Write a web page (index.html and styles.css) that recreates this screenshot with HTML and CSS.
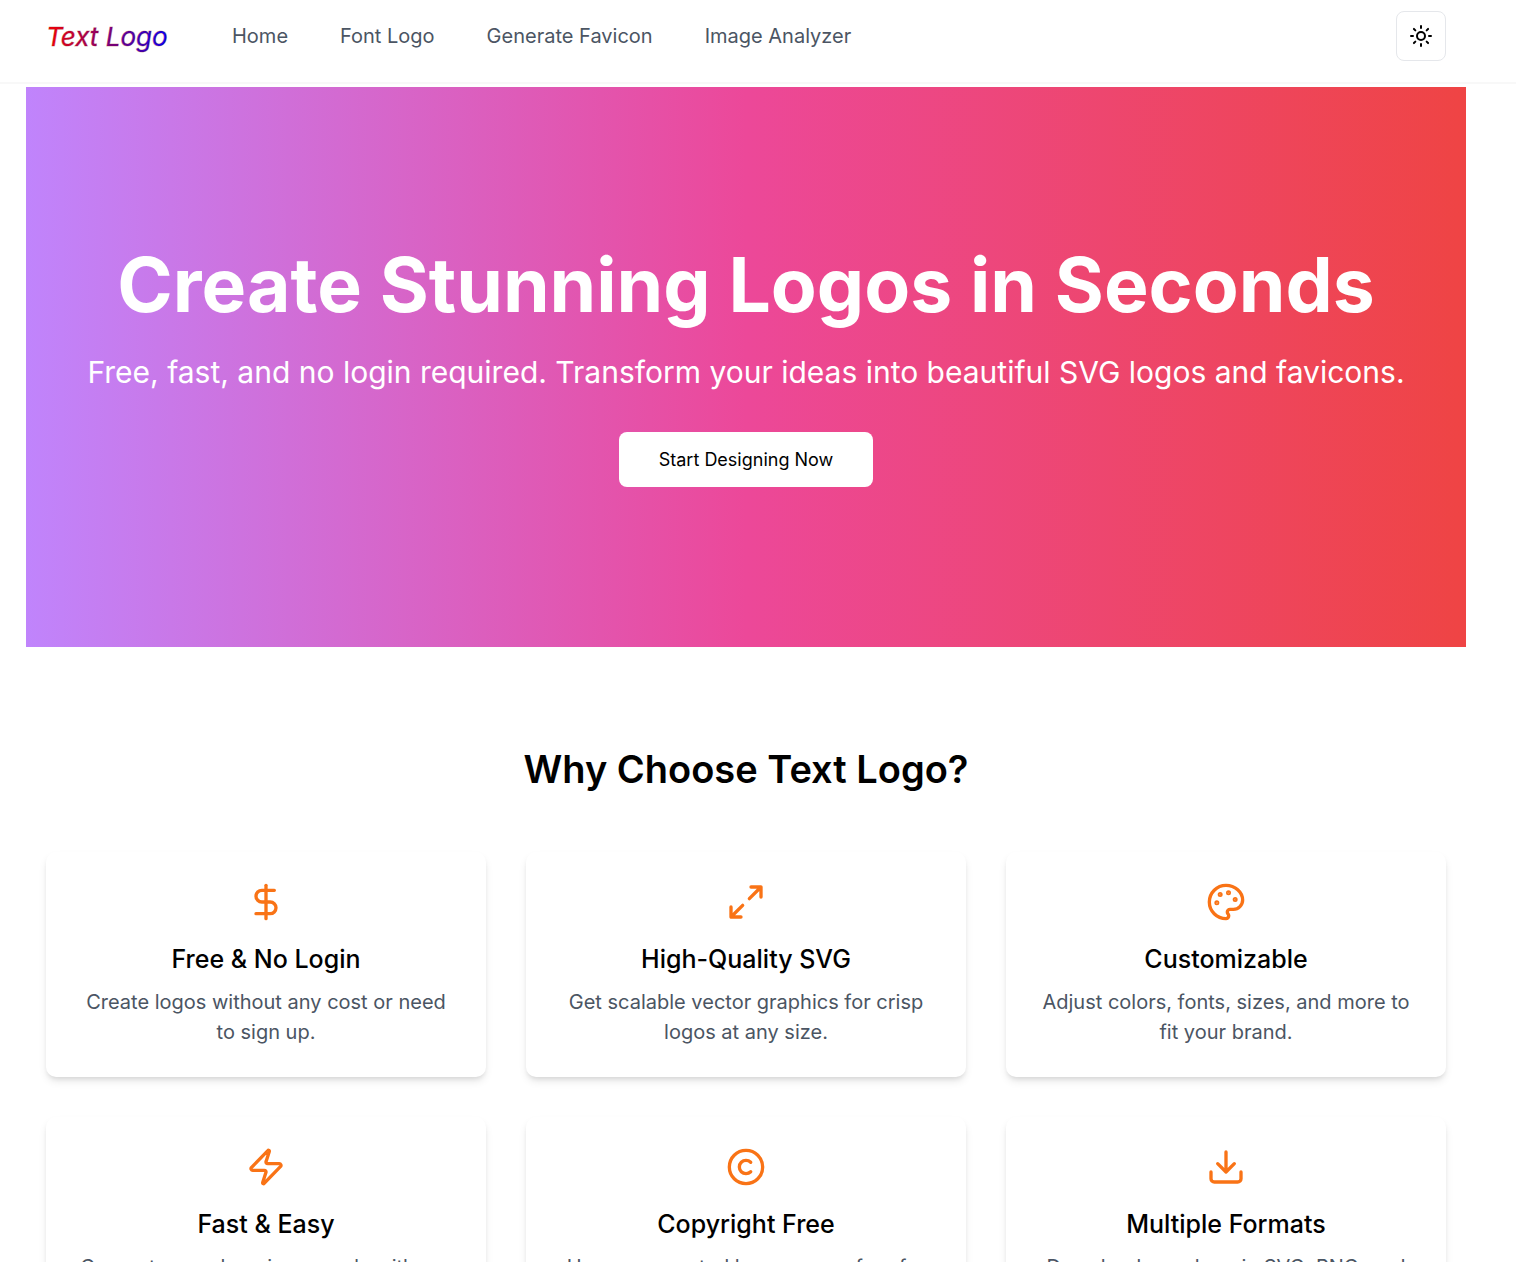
FILE: index.html
```html
<!DOCTYPE html>
<html lang="en">
<head>
  <meta charset="utf-8">
  <meta name="viewport" content="width=device-width, initial-scale=1">
  <title>Text Logo</title>
  <link rel="stylesheet" href="styles.css">
</head>
<body>
<header class="header">
  <a href="#" class="logo" aria-label="Text Logo">
    <svg width="124" height="40" viewBox="0 0 124 40">
      <defs>
        <linearGradient id="logo-fill" x1="0" x2="1" y1="0" y2="0">
          <stop offset="0" stop-color="#ff0000"/>
          <stop offset="1" stop-color="#0000ff"/>
        </linearGradient>
      </defs>
      <text x="0" y="30" class="logo-text">Text Logo</text>
    </svg>
  </a>
  <nav class="nav">
    <a href="#">Home</a>
    <a href="#">Font Logo</a>
    <a href="#">Generate Favicon</a>
    <a href="#">Image Analyzer</a>
  </nav>
  <button class="theme-toggle" aria-label="Toggle theme">
    <svg class="sun" viewBox="0 0 24 24">
      <circle cx="12" cy="12" r="4"/>
      <path d="M12 2v2M12 20v2M4.93 4.93l1.41 1.41M17.66 17.66l1.41 1.41M2 12h2M20 12h2M6.34 17.66l-1.41 1.41M19.07 4.93l-1.41 1.41"/>
    </svg>
  </button>
</header>

<main class="main">
  <section class="hero">
    <h1>Create Stunning Logos in Seconds</h1>
    <p>Free, fast, and no login required. Transform your ideas into beautiful SVG logos and favicons.</p>
    <button class="start">Start Designing Now</button>
  </section>

  <section class="features">
    <h2>Why Choose Text Logo?</h2>
    <div class="grid">
      <div class="card">
        <svg class="icon" viewBox="0 0 24 24">
          <path d="M12 2v20"/>
          <path d="M17 5H9.5a3.5 3.5 0 0 0 0 7h5a3.5 3.5 0 0 1 0 7H6"/>
        </svg>
        <h3>Free &amp; No Login</h3>
        <p>Create logos without any cost or need to sign up.</p>
      </div>
      <div class="card">
        <svg class="icon" viewBox="0 0 24 24">
          <path d="M15 3h6v6M9 21H3v-6M21 3l-7 7M3 21l7-7"/>
        </svg>
        <h3>High-Quality SVG</h3>
        <p>Get scalable vector graphics for crisp logos at any size.</p>
      </div>
      <div class="card">
        <svg class="icon" viewBox="0 0 24 24">
          <g class="dots">
            <circle cx="13.5" cy="6.5" r=".5"/>
            <circle cx="17.5" cy="10.5" r=".5"/>
            <circle cx="8.5" cy="7.5" r=".5"/>
            <circle cx="6.5" cy="12.5" r=".5"/>
          </g>
          <path d="M12 2C6.5 2 2 6.5 2 12s4.5 10 10 10c.926 0 1.648-.746 1.648-1.688 0-.437-.18-.835-.437-1.125-.29-.289-.438-.652-.438-1.125a1.64 1.64 0 0 1 1.668-1.668h1.996c3.051 0 5.555-2.503 5.555-5.554C21.965 6.012 17.461 2 12 2z"/>
        </svg>
        <h3>Customizable</h3>
        <p>Adjust colors, fonts, sizes, and more to fit your brand.</p>
      </div>
      <div class="card">
        <svg class="icon" viewBox="0 0 24 24">
          <path d="M4 14a1 1 0 0 1-.78-1.63l9.9-10.2a.5.5 0 0 1 .86.46l-1.92 6.02A1 1 0 0 0 13 10h7a1 1 0 0 1 .78 1.63l-9.9 10.2a.5.5 0 0 1-.86-.46l1.92-6.02A1 1 0 0 0 11 14z"/>
        </svg>
        <h3>Fast &amp; Easy</h3>
        <p>Generate your logo in seconds with our simple tools.</p>
      </div>
      <div class="card">
        <svg class="icon" viewBox="0 0 24 24">
          <circle cx="12" cy="12" r="10"/>
          <path d="M14.83 14.83a4 4 0 1 1 0-5.66"/>
        </svg>
        <h3>Copyright Free</h3>
        <p>Use your created logos worry-free for any purpose.</p>
      </div>
      <div class="card">
        <svg class="icon" viewBox="0 0 24 24">
          <path d="M21 15v4a2 2 0 0 1-2 2H5a2 2 0 0 1-2-2v-4M7 10l5 5 5-5M12 15V3"/>
        </svg>
        <h3>Multiple Formats</h3>
        <p>Download your logo in SVG, PNG, and more.</p>
      </div>
    </div>
  </section>
</main>
</body>
</html>
```

FILE: styles.css
```css
* {
  box-sizing: border-box;
}
body {
  margin: 0;
  font-family: Inter, sans-serif;
  font-size: 20px;
  line-height: 30px;
  color: #000;
  background-color: #fff;
}
h1, h2, h3, p {
  margin: 0;
}
button {
  font-family: inherit;
  cursor: pointer;
}
.header {
  display: flex;
  align-items: center;
  height: 84px;
  padding: 0 70px 10px 46px;
  border-bottom: 2px solid #f8f8f8;
}
.logo {
  display: flex;
  margin-right: 62px;
}
.logo-text {
  font-family: Inter, sans-serif;
  font-size: 26px;
  font-style: italic;
  fill: url(#logo-fill);
  stroke: rgba(139, 0, 0, 0.3);
  stroke-width: 1px;
}
.nav {
  display: flex;
  gap: 52px;
}
.nav a {
  color: #4b5563;
  text-decoration: none;
}
.theme-toggle {
  display: flex;
  align-items: center;
  justify-content: center;
  width: 50px;
  height: 50px;
  margin-left: auto;
  padding: 0;
  background-color: #fff;
  border: 1px solid #e5e7eb;
  border-radius: 8px;
}
.sun,
.icon {
  fill: none;
  stroke: currentColor;
  stroke-width: 2;
  stroke-linecap: round;
  stroke-linejoin: round;
}
.sun {
  width: 24px;
  height: 24px;
  color: #000;
}

/* hero */
.main {
  padding: 3px 50px 0 26px;
}
.hero {
  display: flex;
  flex-direction: column;
  align-items: center;
  justify-content: center;
  min-height: 560px;
  padding: 0 20px;
  text-align: center;
  color: #fff;
  background-image: linear-gradient(to right, #c084fc, #ec4899, #ef4444);
}
.hero h1 {
  margin-bottom: 30px;
  font-size: 75px;
  line-height: 75px;
  font-weight: 700;
}
.hero p {
  margin-bottom: 40px;
  font-size: 30px;
  line-height: 40px;
}
.start {
  height: 55px;
  padding: 0 40px;
  font-size: 18px;
  font-weight: 400;
  color: #000;
  background-color: #fff;
  border: none;
  border-radius: 8px;
}

/* features */
.features {
  padding: 100px 20px;
  text-align: center;
}
.features h2 {
  margin-bottom: 60px;
  font-size: 38px;
  line-height: 45px;
  font-weight: 600;
}
.grid {
  display: grid;
  grid-template-columns: repeat(3, 1fr);
  gap: 40px;
}
.card {
  padding: 30px;
  background-color: #fff;
  border-radius: 10px;
  box-shadow: 0 5px 8px -1px rgba(0, 0, 0, 0.1), 0 3px 5px -2px rgba(0, 0, 0, 0.1);
}
.icon {
  display: block;
  width: 40px;
  height: 40px;
  margin: 0 auto 20px;
  color: #f97316;
}
.dots {
  fill: currentColor;
}
.card h3 {
  margin-bottom: 10px;
  font-size: 25px;
  line-height: 35px;
  font-weight: 500;
}
.card p {
  color: #4b5563;
}
```
